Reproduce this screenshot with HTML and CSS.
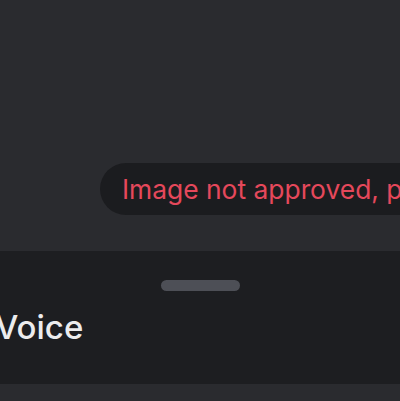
FILE: index.html
```html
<!DOCTYPE html>
<html>
  <head>
    <meta charset="utf-8" />
    <meta name="viewport" content="width=device-width, initial-scale=1" />
    <title>Voice</title>
    <link rel="stylesheet" href="styles.css">
  </head>

  <body>
    <div class="screen">
      <div class="toast-row">
        <div class="toast">Image not approved, please try again</div>
      </div>
    </div>

    <div class="sheet">
      <div class="handle"></div>
      <h2 class="sheet-title">Voice</h2>
    </div>
  </body>
</html>
```

FILE: styles.css
```css
body {
  margin: 0;
  background: #2a2b2f;
  font-family: Inter, "Noto Sans", sans-serif;
  width: 400px;
  height: 401px;
  overflow: hidden;
}

.screen {
  height: 251px;
  display: flex;
  flex-direction: column;
  justify-content: flex-start;
}

.toast-row {
  margin-top: 163px;
  padding-left: 100px;
  overflow: hidden;
}

.toast {
  display: inline-flex;
  align-items: center;
  height: 52px;
  padding: 0 24px 0 22px;
  border-radius: 26px;
  background: #1b1c1f;
  color: #e5485b;
  font-size: 26.4px;
  white-space: nowrap;
}

.sheet {
  height: 133px;
  background: #1d1e21;
  display: flex;
  flex-direction: column;
  align-items: center;
}

.handle {
  margin-top: 29px;
  width: 79px;
  height: 11px;
  border-radius: 6px;
  background: #4d4f56;
}

.sheet-title {
  align-self: flex-start;
  margin: 16px 0 0 -5px;
  color: #ececee;
  font-size: 33px;
  font-weight: 500;
  line-height: 40px;
}
```
